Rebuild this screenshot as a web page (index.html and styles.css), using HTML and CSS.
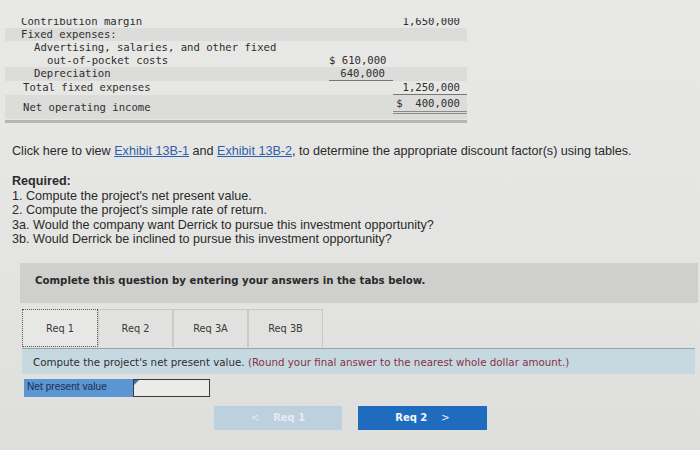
FILE: index.html
```html
<!DOCTYPE html>
<html>
<head>
<meta charset="utf-8">
<link rel="stylesheet" href="styles.css">
</head>
<body>
<div class="page">
  <div class="stmt-clip">
    <div class="stmt">
      <div class="row">
        <div class="lbl">Contribution margin</div>
        <div class="c1"></div>
        <div class="c2">1,650,000</div>
      </div>
      <div class="row stripe">
        <div class="lbl">Fixed expenses:</div>
        <div class="c1"></div>
        <div class="c2"></div>
      </div>
      <div class="row">
        <div class="lbl in1">Advertising, salaries, and other fixed<br><span class="in2">out-of-pocket costs</span></div>
        <div class="c1 bottom">$ 610,000</div>
        <div class="c2"></div>
      </div>
      <div class="row stripe">
        <div class="lbl in1">Depreciation</div>
        <div class="c1 under">640,000</div>
        <div class="c2"></div>
      </div>
      <div class="row">
        <div class="lbl tot">Total fixed expenses</div>
        <div class="c1"></div>
        <div class="c2 under">1,250,000</div>
      </div>
      <div class="row stripe noi">
        <div class="lbl tot mid">Net operating income</div>
        <div class="c1"></div>
        <div class="c2 dbl">$&nbsp;&nbsp;400,000</div>
      </div>
    </div>
  </div>
  <div class="rule"></div>

  <div class="question">
    <p class="exhibit">Click here to view <a href="#">Exhibit 13B-1</a> and <a href="#">Exhibit 13B-2</a>, to determine the appropriate discount factor(s) using tables.</p>
    <p class="req-title">Required:</p>
    <p class="req">1. Compute the project's net present value.<br>2. Compute the project's simple rate of return.<br>3a. Would the company want Derrick to pursue this investment opportunity?<br>3b. Would Derrick be inclined to pursue this investment opportunity?</p>
  </div>

  <div class="complete">Complete this question by entering your answers in the tabs below.</div>

  <div class="tabs">
    <div class="tab active">Req 1</div>
    <div class="tab">Req 2</div>
    <div class="tab">Req 3A</div>
    <div class="tab">Req 3B</div>
  </div>
  <div class="instr">Compute the project's net present value. <span class="round">(Round your final answer to the nearest whole dollar amount.)</span></div>

  <div class="answer">
    <div class="ans-label">Net present value</div>
    <div class="ans-input"><span class="mark"></span></div>
  </div>

  <div class="nav">
    <div class="btn prev"><span class="chev">&lt;</span> Req 1</div>
    <div class="btn next">Req 2 <span class="chev">&gt;</span></div>
  </div>
</div>
</body>
</html>
```

FILE: styles.css
```css
html, body {
  margin: 0;
  padding: 0;
  background: #e5e5e3;
}
.page {
  width: 700px;
  height: 450px;
  overflow: hidden;
  background: linear-gradient(180deg, #e8e8e6 0%, #e4e4e2 60%, #dededc 100%);
  color: #2b2b2b;
}
.stmt-clip {
  margin: 18px 0 0 5px;
  width: 462px;
  overflow: hidden;
}
.stmt {
  margin-top: -3px;
  font-family: "DejaVu Sans Mono", "Liberation Mono", monospace;
  font-size: 10.6px;
  line-height: 13px;
  color: #2e2e2e;
}
.row {
  display: grid;
  grid-template-columns: 320px 68px 74px;
}
.stripe {
  background: #dcdcda;
}
.lbl {
  padding-left: 16px;
  white-space: nowrap;
}
.lbl.in1 { padding-left: 29px; }
.in2 { padding-left: 13px; }
.lbl.tot { padding-left: 18px; }
.c1 {
  text-align: right;
  padding-right: 8px;
  margin-left: 4px;
  white-space: nowrap;
}
.c1.bottom { align-self: end; }
.c2 {
  text-align: right;
  padding-right: 7px;
  white-space: nowrap;
}
.under { border-bottom: 1px solid #777; }
.noi { height: 24px; }
.lbl.mid { align-self: center; padding-top: 1px; }
.dbl {
  align-self: start;
  padding-top: 2px;
  height: 14px;
  border-bottom: 3px double #8a8a8a;
}
.rule {
  margin: 1px 0 0 5px;
  width: 462px;
  height: 3px;
  background: #b6b6b4;
}
.question {
  padding: 21px 0 0 12px;
  font-family: "Liberation Sans", Arial, sans-serif;
  font-size: 12.6px;
  line-height: 15px;
  color: #2a2a2a;
}
.question p { margin: 0; }
.exhibit a {
  color: #2f5fa8;
  text-decoration: underline;
}
.req-title {
  font-weight: bold;
  line-height: 14.5px;
  margin-top: 15px !important;
}
.req { line-height: 14.5px; }
.complete {
  margin: 16px 2px 0 20px;
  height: 40px;
  box-sizing: border-box;
  padding: 11px 0 0 15px;
  background: #cfcfcd;
  font-family: "DejaVu Sans", Verdana, sans-serif;
  font-weight: bold;
  font-size: 10.2px;
  line-height: 14px;
  color: #2a2a2a;
}
.tabs {
  display: flex;
  margin: 6px 0 0 22px;
}
.tab {
  width: 75px;
  height: 38px;
  box-sizing: border-box;
  border: 1px solid #c9c9c7;
  border-bottom: none;
  background: #e1e1df;
  display: flex;
  align-items: center;
  justify-content: center;
  font-family: "DejaVu Sans", Verdana, sans-serif;
  font-size: 9.8px;
  color: #3a3a3a;
  padding-top: 1px;
}
.tab.active {
  width: 76px;
  border: 1px dotted #555;
  background: #e7e7e5;
}
.instr {
  margin: 1px 5px 0 22px;
  height: 26px;
  box-sizing: border-box;
  border-top: 1px solid #9aa4a8;
  background: #c6d9e1;
  padding: 6px 0 0 11px;
  font-family: "DejaVu Sans", Verdana, sans-serif;
  font-size: 10.3px;
  line-height: 14px;
  color: #2e2e2e;
  white-space: nowrap;
}
.round { color: #8a2f44; }
.answer {
  display: flex;
  margin: 5px 0 0 24px;
  height: 18px;
}
.ans-label {
  width: 109px;
  background: #5b95d2;
  box-sizing: border-box;
  padding: 2px 0 0 3px;
  font-family: "Liberation Sans", Arial, sans-serif;
  font-size: 10.2px;
  color: #1d2d4a;
}
.ans-input {
  position: relative;
  width: 77px;
  box-sizing: border-box;
  border: 1px solid #3a3a3a;
  background: #ebebea;
}
.mark {
  position: absolute;
  left: 0;
  top: 0;
  width: 0;
  height: 0;
  border-top: 5px solid #3c6fb5;
  border-right: 5px solid transparent;
}
.nav {
  display: flex;
  gap: 16px;
  margin: 9px 0 0 214px;
}
.btn {
  width: 128px;
  height: 24px;
  display: flex;
  align-items: center;
  justify-content: center;
  font-family: "DejaVu Sans", Verdana, sans-serif;
  font-size: 10px;
  font-weight: bold;
}
.btn.prev {
  background: #bdd0de;
  color: #e3ecf3;
}
.btn.prev .chev { margin-right: 14px; font-weight: normal; }
.btn.next {
  width: 129px;
  background: #1f6cbf;
  color: #f2f6fb;
}
.btn.next .chev { margin-left: 14px; font-weight: normal; }
```
